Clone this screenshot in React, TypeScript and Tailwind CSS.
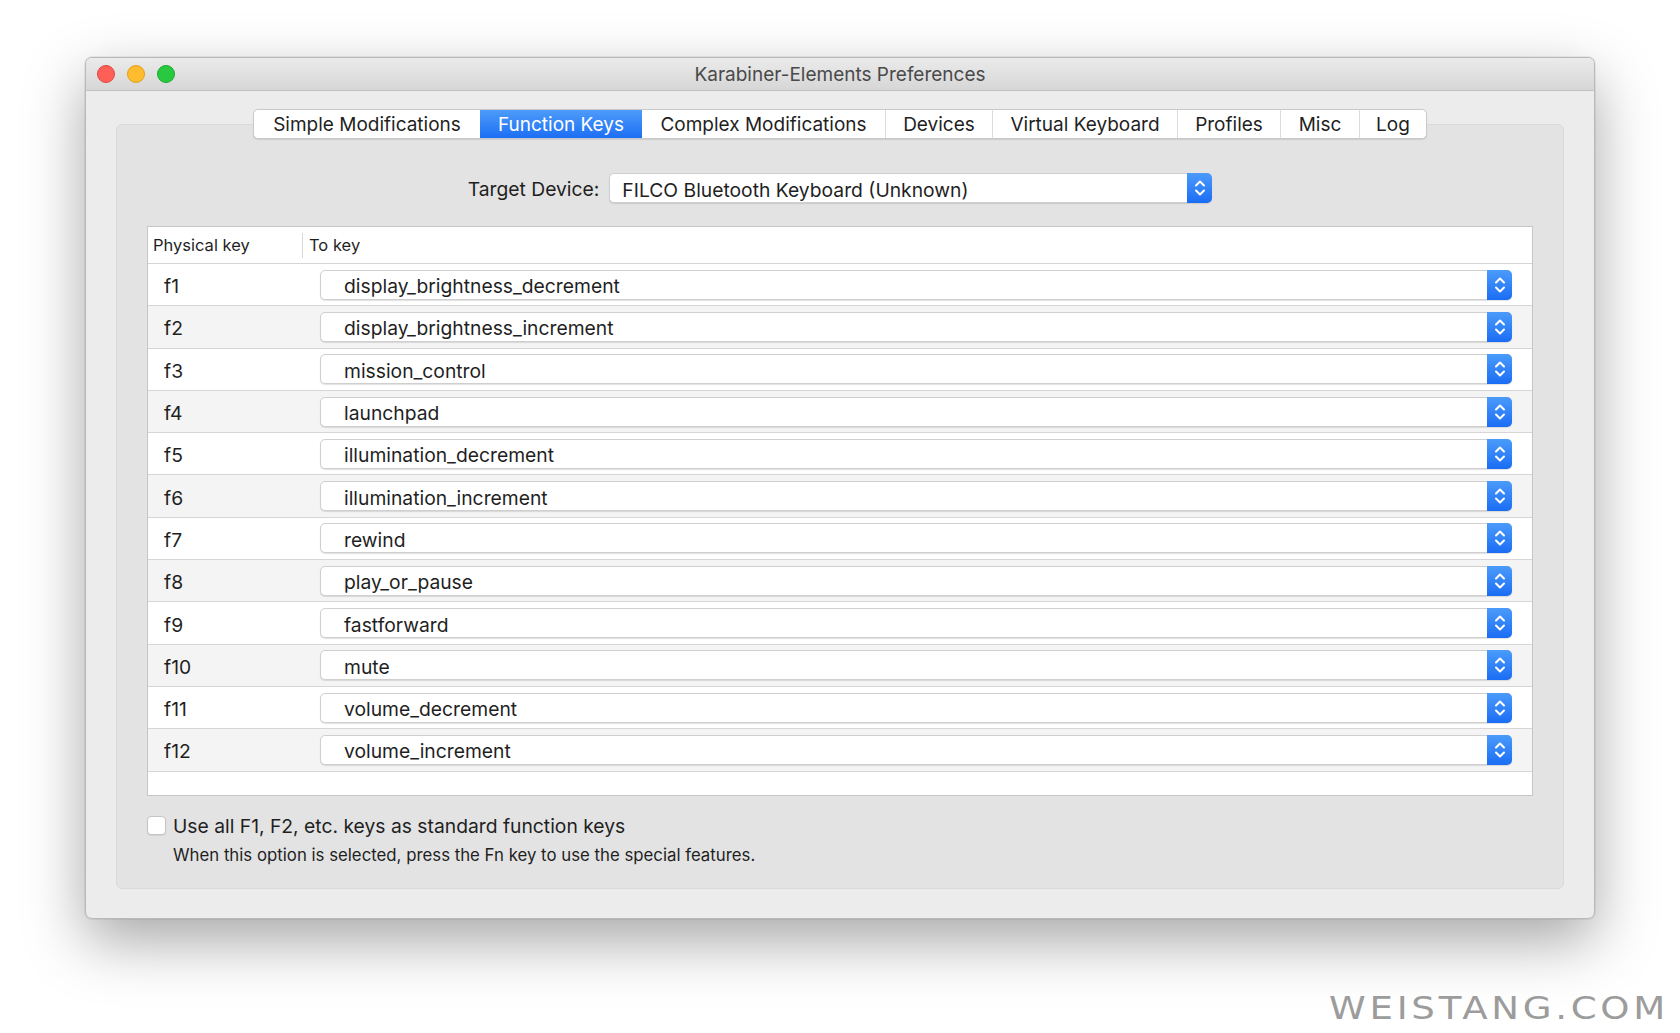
const TABS = [
  { label: "Simple Modifications", w: "w-[226px]" },
  { label: "Function Keys", w: "w-[162px]", active: true },
  { label: "Complex Modifications", w: "w-[243px]" },
  { label: "Devices", w: "w-[107px]" },
  { label: "Virtual Keyboard", w: "w-[185px]" },
  { label: "Profiles", w: "w-[103px]" },
  { label: "Misc", w: "w-[79px]" },
  { label: "Log", w: "w-[67px]" },
];

const KEYS = [
  { key: "f1", to: "display_brightness_decrement" },
  { key: "f2", to: "display_brightness_increment" },
  { key: "f3", to: "mission_control" },
  { key: "f4", to: "launchpad" },
  { key: "f5", to: "illumination_decrement" },
  { key: "f6", to: "illumination_increment" },
  { key: "f7", to: "rewind" },
  { key: "f8", to: "play_or_pause" },
  { key: "f9", to: "fastforward" },
  { key: "f10", to: "mute" },
  { key: "f11", to: "volume_decrement" },
  { key: "f12", to: "volume_increment" },
];

function Chevrons() {
  return (
    <svg width="14" height="22" viewBox="0 0 14 22" fill="none" stroke="white" strokeWidth="2" strokeLinecap="round" strokeLinejoin="round" aria-hidden="true">
      <path d="M3 8.5 L7 4.5 L11 8.5" />
      <path d="M3 13.5 L7 17.5 L11 13.5" />
    </svg>
  );
}

function PopUp({ value, className }: { value: string; className: string }) {
  return (
    <div className={`flex items-stretch h-[30px] rounded-[5px] bg-white border border-[#cfcfcf] shadow-[0_1px_1px_rgba(0,0,0,0.12)] ${className}`}>
      <span className="flex-1 flex items-center pt-[4px] text-[19.3px] text-[#1f1f1f] truncate">{value}</span>
      <span className="w-[25px] -my-px -mr-px flex items-center justify-center rounded-r-[5px] bg-gradient-to-b from-[#4b9bfa] to-[#1a6cf4]">
        <Chevrons />
      </span>
    </div>
  );
}

export default function App() {
  return (
    <div
      className="w-[1680px] h-[1033px] bg-white relative overflow-hidden pl-[85px] pt-[57px]"
      style={{ fontFamily: "Inter, 'Liberation Sans', sans-serif" }}
    >
      {/* Window */}
      <div className="w-[1510px] h-[862px] rounded-[7px] border border-[#b9b9b9] bg-[#ececec] overflow-hidden flex flex-col shadow-[0_22px_60px_rgba(0,0,0,0.35),0_0_0_1px_rgba(0,0,0,0.06)]">
        {/* Title bar */}
        <div className="h-[33px] shrink-0 relative flex items-center justify-center bg-gradient-to-b from-[#ebebeb] to-[#d6d6d6] border-b border-[#c2c2c2]">
          <div className="absolute left-[11px] top-[7px] flex gap-[12px]">
            <span className="w-[18px] h-[18px] rounded-full bg-[#fe5f57] border border-[#e2463f]" />
            <span className="w-[18px] h-[18px] rounded-full bg-[#febc2e] border border-[#e1a116]" />
            <span className="w-[18px] h-[18px] rounded-full bg-[#28c840] border border-[#1aab29]" />
          </div>
          <span className="pt-[2px] text-[19px] text-[#4a4a4a]">Karabiner-Elements Preferences</span>
        </div>

        {/* Body */}
        <div className="flex-1 flex flex-col px-[30px] pt-[18px] pb-[29px]">
          {/* Tabs */}
          <div className="relative z-10 self-center flex h-[30px] rounded-[5px] bg-white border border-[#c9c9c9] shadow-[0_1px_1px_rgba(0,0,0,0.1)] overflow-hidden">
            {TABS.map((t, i) => (
              <div
                key={t.label}
                className={`${t.w} flex items-center justify-center pt-[2px] text-[19px] ${
                  t.active
                    ? "bg-gradient-to-b from-[#4d9bfa] to-[#1c6ef4] text-white"
                    : "text-[#1f1f1f]"
                } ${i > 0 && !t.active && !TABS[i - 1].active ? "border-l border-[#dcdcdc]" : ""}`}
              >
                {t.label}
              </div>
            ))}
          </div>

          {/* Panel */}
          <div className="flex-1 -mt-[15px] rounded-[6px] bg-[#e3e3e3] border border-[#d9d9d9] flex flex-col pt-[48px] px-[30px]">
            {/* Target device */}
            <div className="h-[30px] flex items-center justify-center gap-[10px]">
              <span className="pt-[3px] text-[19.3px] text-[#1f1f1f]">Target Device:</span>
              <PopUp value="FILCO Bluetooth Keyboard (Unknown)" className="w-[603px] pl-[12px]" />
            </div>

            {/* Table */}
            <div className="mt-[23px] bg-white border border-[#c6c6c6] flex flex-col">
              <div className="h-[37px] flex items-center border-b border-[#d4d4d4] text-[16.5px] text-[#1f1f1f]">
                <span className="w-[154px] pl-[5px]">Physical key</span>
                <span className="w-px h-[25px] bg-[#d8d8d8]" />
                <span className="pl-[6px]">To key</span>
              </div>
              {KEYS.map((k, i) => (
                <div
                  key={k.key}
                  className={`h-[42.3px] flex items-center border-b border-[#d6d6d6] ${i % 2 === 1 ? "bg-[#f4f4f4]" : "bg-white"}`}
                >
                  <span className="w-[172px] pl-[16px] pt-[4px] text-[19.3px] text-[#1f1f1f]">{k.key}</span>
                  <PopUp value={k.to} className="flex-1 mr-[20px] pl-[23px]" />
                </div>
              ))}
              <div className="h-[23px]" />
            </div>

            {/* Checkbox */}
            <div className="mt-[20px] h-[20px] flex items-center gap-[7px]">
              <span className="w-[19px] h-[19px] shrink-0 rounded-[4px] bg-white border border-[#c4c4c4] shadow-[0_1px_1px_rgba(0,0,0,0.08)]" />
              <span className="pt-[2px] text-[19.3px] text-[#1f1f1f]">Use all F1, F2, etc. keys as standard function keys</span>
            </div>
            <p className="mt-[9px] pl-[26px] pt-[1px] text-[16.8px] leading-[18px] text-[#1f1f1f]">
              When this option is selected, press the Fn key to use the special features.
            </p>
          </div>
        </div>
      </div>

      {/* Watermark */}
      <div className="absolute right-[11px] bottom-[9px] origin-right scale-x-[1.16] text-[32px] leading-none tracking-[0.1em] text-[#9c9c9c]" style={{ fontFamily: "'DejaVu Sans', sans-serif" }}>
        WEISTANG.COM
      </div>
    </div>
  );
}
